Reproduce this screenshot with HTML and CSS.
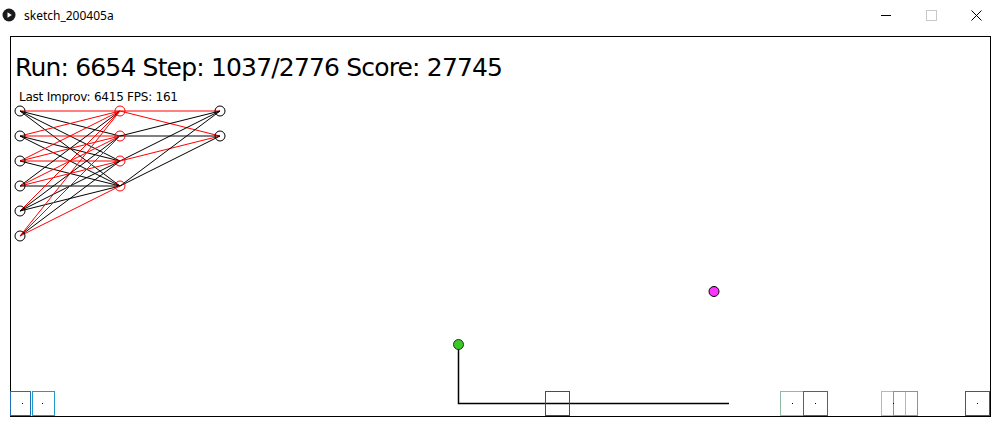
FILE: index.html
```html
<!DOCTYPE html>
<html lang="en">
<head>
  <meta charset="UTF-8" />
  <title>sketch_200405a</title>
  <link rel="stylesheet" href="styles.css">
</head>
<body>

  <div class="titlebar">
    <div class="app">
      <svg class="app-icon" width="14" height="14" viewBox="0 0 14 14">
        <circle cx="7" cy="7" r="6.5" fill="#1a1a1a" />
        <path d="M5.5 4.2 L9.8 7 L5.5 9.8 Z" fill="#fff" />
      </svg>
      <span class="app-name">sketch_200405a</span>
    </div>
    <div class="controls">
      <span class="ctl"><svg width="11" height="11" viewBox="0 0 11 11"><path d="M0 5.5 H10" stroke="#000" stroke-width="1" /></svg></span>
      <span class="ctl"><svg width="11" height="11" viewBox="0 0 11 11"><rect x="0.5" y="0.5" width="10" height="10" fill="none" stroke="#c8c8c8" /></svg></span>
      <span class="ctl"><svg width="11" height="11" viewBox="0 0 11 11"><path d="M0.5 0.5 L10.5 10.5 M10.5 0.5 L0.5 10.5" stroke="#000" stroke-width="1" /></svg></span>
    </div>
  </div>

  <svg class="stage" width="999" height="394" viewBox="0 30 999 394">
    <rect x="10.5" y="36.5" width="980" height="380" fill="#fff" stroke="#000" />

    <text class="big" x="15" y="76" textLength="488" lengthAdjust="spacing">Run: 6654 Step: 1037/2776 Score: 27745</text>
    <text class="small" x="19" y="101" textLength="159" lengthAdjust="spacing">Last Improv: 6415 FPS: 161</text>

    <!-- input -> hidden -->
    <g class="links">
      <line x1="20" y1="111" x2="120" y2="111" class="neg" />
      <line x1="20" y1="111" x2="120" y2="136" />
      <line x1="20" y1="111" x2="120" y2="161" />
      <line x1="20" y1="111" x2="120" y2="186" />

      <line x1="20" y1="136" x2="120" y2="111" class="neg" />
      <line x1="20" y1="136" x2="120" y2="136" class="neg" />
      <line x1="20" y1="136" x2="120" y2="161" />
      <line x1="20" y1="136" x2="120" y2="186" />

      <line x1="20" y1="161" x2="120" y2="111" class="neg" />
      <line x1="20" y1="161" x2="120" y2="136" class="neg" />
      <line x1="20" y1="161" x2="120" y2="161" class="neg" />
      <line x1="20" y1="161" x2="120" y2="186" />

      <line x1="20" y1="186" x2="120" y2="111" />
      <line x1="20" y1="186" x2="120" y2="136" class="neg" />
      <line x1="20" y1="186" x2="120" y2="161" class="neg" />
      <line x1="20" y1="186" x2="120" y2="186" />

      <line x1="20" y1="211" x2="120" y2="111" class="neg" />
      <line x1="20" y1="211" x2="120" y2="136" />
      <line x1="20" y1="211" x2="120" y2="161" />
      <line x1="20" y1="211" x2="120" y2="186" />

      <line x1="20" y1="236" x2="120" y2="111" class="neg" />
      <line x1="20" y1="236" x2="120" y2="136" class="neg" />
      <line x1="20" y1="236" x2="120" y2="161" />
      <line x1="20" y1="236" x2="120" y2="186" class="neg" />

      <!-- hidden -> output -->
      <line x1="120" y1="111" x2="220" y2="111" class="neg" />
      <line x1="120" y1="111" x2="220" y2="136" class="neg" />
      <line x1="120" y1="136" x2="220" y2="111" />
      <line x1="120" y1="136" x2="220" y2="136" />
      <line x1="120" y1="161" x2="220" y2="111" />
      <line x1="120" y1="161" x2="220" y2="136" class="neg" />
      <line x1="120" y1="186" x2="220" y2="111" />
      <line x1="120" y1="186" x2="220" y2="136" />
    </g>

    <g class="nodes">
      <circle cx="20" cy="111" r="5" />
      <circle cx="20" cy="136" r="5" />
      <circle cx="20" cy="161" r="5" />
      <circle cx="20" cy="186" r="5" />
      <circle cx="20" cy="211" r="5" />
      <circle cx="20" cy="236" r="5" />
      <circle cx="120" cy="111" r="5" class="hid" />
      <circle cx="120" cy="136" r="5" class="hid" />
      <circle cx="120" cy="161" r="5" class="hid" />
      <circle cx="120" cy="186" r="5" class="hid" />
      <circle cx="220" cy="111" r="5" />
      <circle cx="220" cy="136" r="5" />
    </g>

    <!-- arm -->
    <path class="arm" d="M458.5 344 V403.5 H729" />
    <circle class="ball" cx="458.5" cy="344.5" r="5" />
    <circle class="target" cx="714" cy="291.5" r="5" />

    <!-- floor boxes -->
    <g class="boxes">
      <rect x="10.5" y="391.5" width="20" height="24" stroke="#1f6cbb" />
      <rect x="32.5" y="391.5" width="22" height="24" stroke="#1f9cc4" />
      <rect x="545.5" y="391.5" width="24" height="24" stroke="#92245e" />
      <rect x="780.5" y="391.5" width="23" height="24" stroke="#8fbba5" />
      <rect x="803.5" y="391.5" width="24" height="24" stroke="#2e7b4c" />
      <rect x="881.5" y="391.5" width="24" height="24" stroke="#a3cb8a" />
      <rect x="893.5" y="391.5" width="24" height="24" stroke="#b98957" />
      <rect x="965.5" y="391.5" width="24" height="24" stroke="#5c3eb9" />
    </g>
    <g class="dots">
      <rect x="22" y="403" width="1" height="1" />
      <rect x="42" y="403" width="1" height="1" />
      <rect x="792" y="403" width="1" height="1" />
      <rect x="815" y="403" width="1" height="1" />
      <rect x="893" y="403" width="1" height="1" />
      <rect x="977" y="403" width="1" height="1" />
    </g>
  </svg>

</body>
</html>
```

FILE: styles.css
```css
body {
  margin: 0;
  background: #fff;
  font-family: "Noto Sans", "DejaVu Sans", sans-serif;
  width: 999px;
  height: 424px;
  overflow: hidden;
}

.titlebar {
  height: 30px;
  display: flex;
  justify-content: space-between;
  align-items: center;
}

.app {
  display: flex;
  align-items: center;
  gap: 8px;
  padding-left: 2px;
}

.app-icon {
  display: block;
}

.app-name {
  font-size: 12px;
  color: #000;
}

.controls {
  display: flex;
}

.ctl {
  width: 45px;
  display: flex;
  justify-content: center;
}

.stage {
  display: block;
}

.big {
  font-family: "DejaVu Sans", sans-serif;
  font-size: 25px;
  fill: #000;
}

.small {
  font-family: "DejaVu Sans", sans-serif;
  font-size: 12px;
  fill: #000;
}

.links line {
  stroke: #000;
  stroke-width: 1;
}

.links line.neg {
  stroke: #ff0000;
}

.nodes circle {
  fill: none;
  stroke: #000;
  stroke-width: 1;
}

.nodes circle.hid {
  stroke: #ff0000;
}

.arm {
  fill: none;
  stroke: #000;
  stroke-width: 1.5;
}

.ball {
  fill: #3cc828;
  stroke: #1b3a12;
  stroke-width: 1;
}

.target {
  fill: #ff33ff;
  stroke: #000;
  stroke-width: 1;
}

.boxes rect {
  fill: none;
  stroke-width: 1;
}

.dots rect {
  fill: #000;
}
```
